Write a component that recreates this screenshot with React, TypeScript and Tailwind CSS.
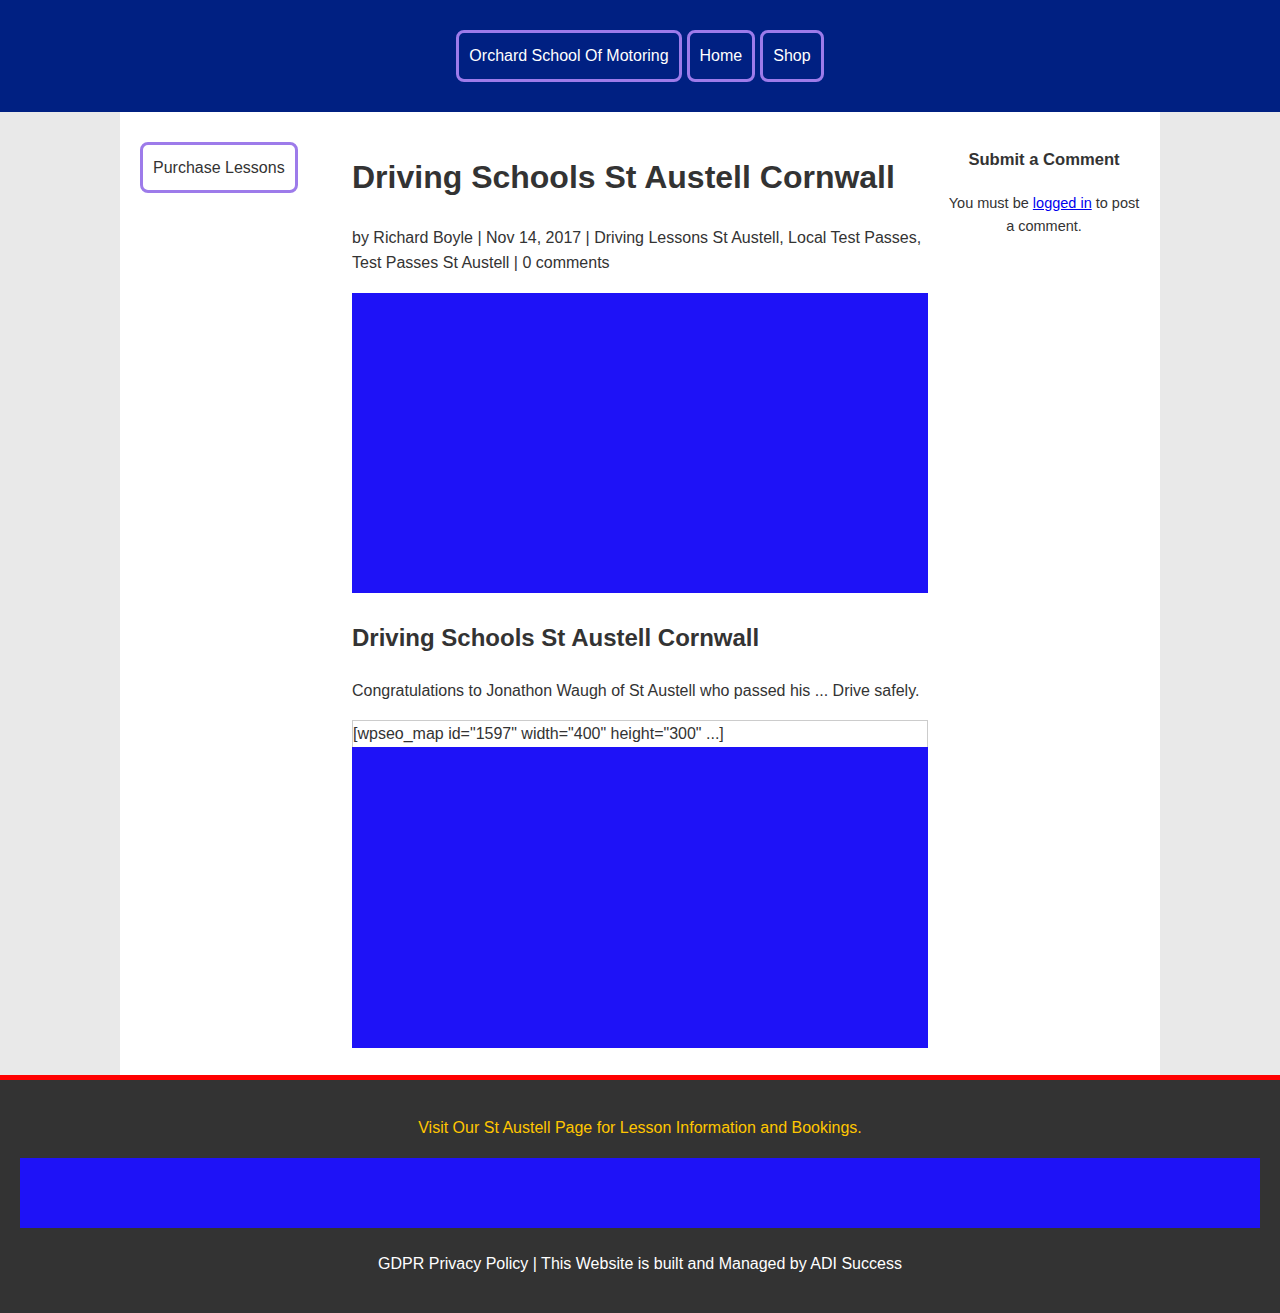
import React from "react";

const font = { fontFamily: '"Liberation Sans", Arial, sans-serif' };

function NavBtn({ children }: { children: React.ReactNode }) {
  return (
    <a className="block border-[3px] border-[#9d7bea] rounded-[8px] px-[10px] py-[13px] text-[16px] leading-[20px] text-white">
      {children}
    </a>
  );
}

export default function App() {
  return (
    <div style={font} className="bg-[#e9e9e9] text-[#333333] min-h-[1313px]">
      <header className="bg-[#002082] h-[112px] flex justify-center pt-[30px]">
        <nav className="flex gap-[5px] h-[52px]">
          <NavBtn>Orchard School Of Motoring</NavBtn>
          <NavBtn>Home</NavBtn>
          <NavBtn>Shop</NavBtn>
        </nav>
      </header>

      <main className="mx-auto w-[1040px] bg-white flex pl-5 pb-[27px]">
        <aside className="w-[212px] pt-[30px]">
          <a className="inline-block border-[3px] border-[#9d7bea] rounded-[8px] px-[10px] py-[13px] text-[16px] leading-[19px] text-[#333333]">
            Purchase Lessons
          </a>
        </aside>

        <article className="w-[576px] pt-[45px]">
          <h1 className="text-[32px] leading-[41px] font-bold">Driving Schools St Austell Cornwall</h1>
          <p className="mt-[27px] text-[16px] leading-[25px]">
            by Richard Boyle | Nov 14, 2017 | Driving Lessons St Austell, Local Test Passes, Test Passes St Austell | 0 comments
          </p>
          <div className="mt-[17.5px] h-[300px] bg-[#1e12f7]" />
          <h2 className="mt-[30.5px] text-[24px] leading-[29px] font-bold">Driving Schools St Austell Cornwall</h2>
          <p className="mt-[26px] text-[16px] leading-[25px]">
            Congratulations to Jonathon Waugh of St Austell who passed his ... Drive safely.
          </p>
          <div className="mt-[16.5px] border border-[#cccccc] border-b-0 h-[27px] text-[16px] leading-[25px]">
            [wpseo_map id="1597" width="400" height="300" ...]
          </div>
          <div className="h-[301px] bg-[#1e12f7]" />
        </article>

        <aside className="w-[208px] ml-[12px] pt-[38px] text-center">
          <h3 className="text-[16.6px] leading-[20px] font-bold">Submit a Comment</h3>
          <p className="mt-[21.5px] text-[14.5px] leading-[23px] px-[4px]">
            You must be <a className="text-[#0000ee] underline">logged in</a> to post a comment.
          </p>
        </aside>
      </main>

      <footer className="bg-[#333333] border-t-[5px] border-[#ff0000] pt-[38px] pb-[39px] px-5 text-center">
        <p className="text-[16px] leading-[20px] text-[#ffc600]">
          Visit Our St Austell Page for Lesson Information and Bookings.
        </p>
        <div className="mt-[20px] h-[70px] bg-[#1e12f7]" />
        <p className="mt-[26px] text-[16px] leading-[20px] text-white">
          GDPR Privacy Policy | This Website is built and Managed by ADI Success
        </p>
      </footer>
    </div>
  );
}
